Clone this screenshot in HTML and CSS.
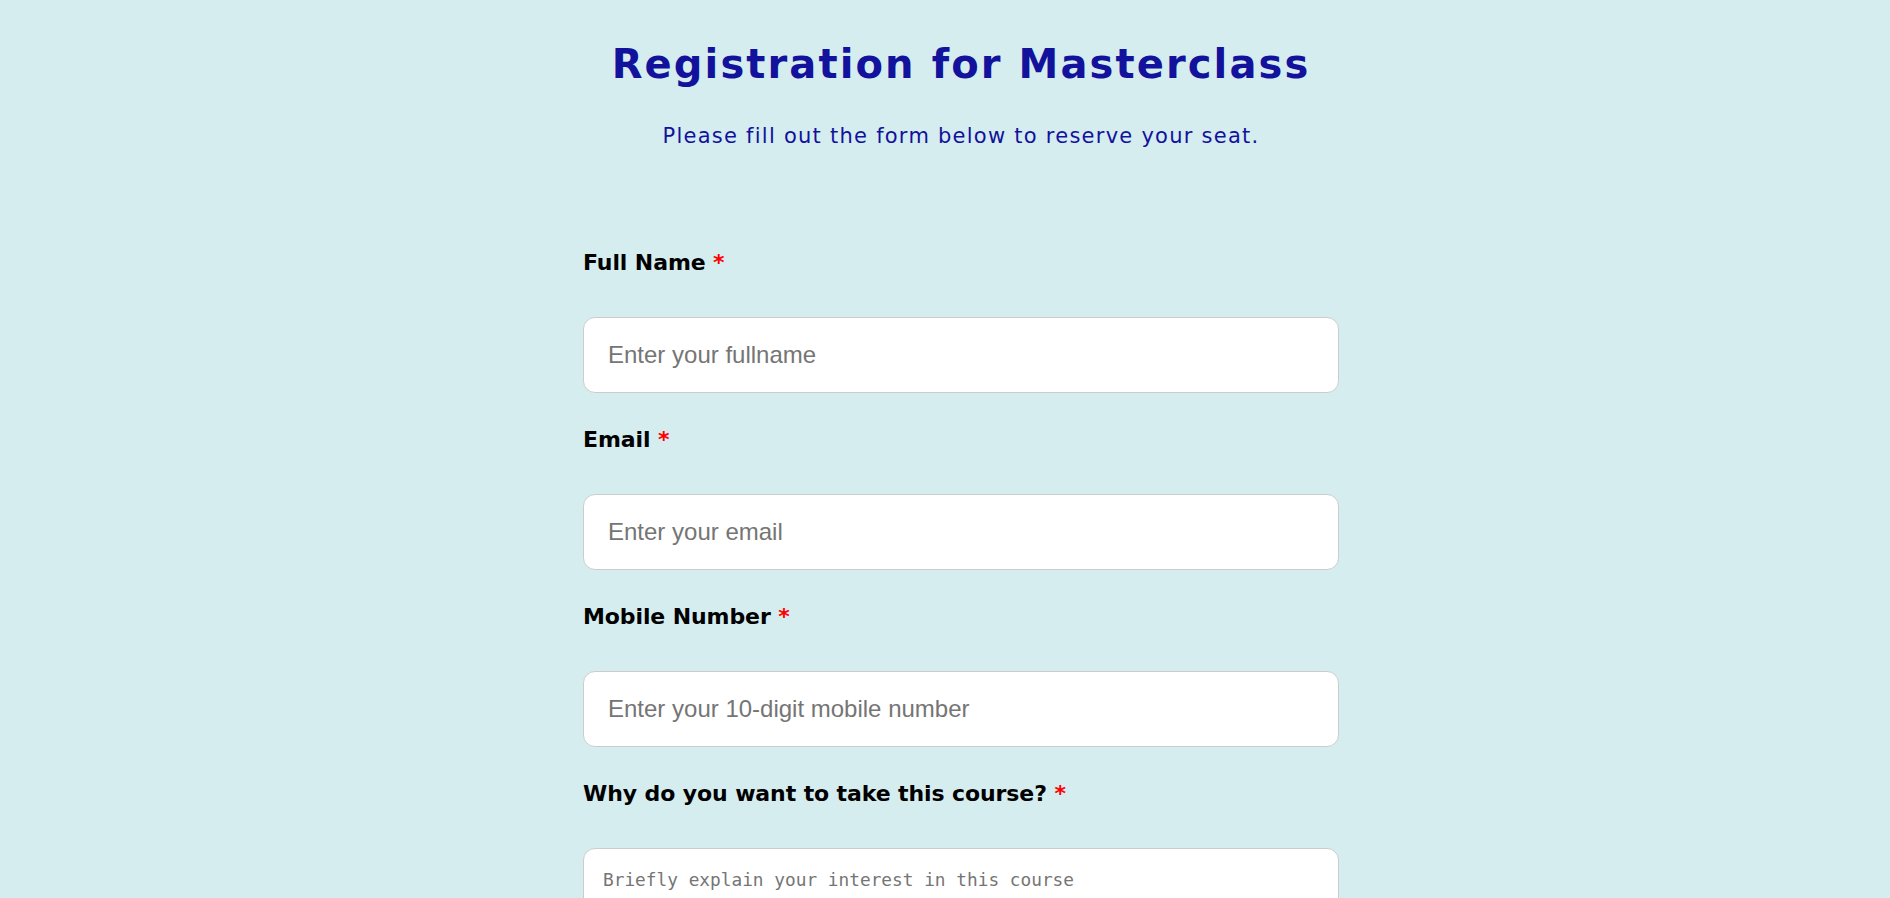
FILE: index.html
```html
<!DOCTYPE html>
<html lang="en">
<head>
<meta charset="utf-8">
<title>Registration for Masterclass</title>
<link rel="stylesheet" href="styles.css">
</head>
<body>
<main class="page">
  <header class="intro">
    <h1 class="title">Registration for Masterclass</h1>
    <p class="subtitle">Please fill out the form below to reserve your seat.</p>
  </header>
  <form class="form">
    <div class="field">
      <label class="label" for="name">Full Name <span class="req">*</span></label>
      <input class="input" id="name" type="text" placeholder="Enter your fullname">
    </div>
    <div class="field">
      <label class="label" for="email">Email <span class="req">*</span></label>
      <input class="input" id="email" type="email" placeholder="Enter your email">
    </div>
    <div class="field">
      <label class="label" for="mobile">Mobile Number <span class="req">*</span></label>
      <input class="input" id="mobile" type="tel" placeholder="Enter your 10-digit mobile number">
    </div>
    <div class="field">
      <label class="label" for="why">Why do you want to take this course? <span class="req">*</span></label>
      <textarea class="textarea" id="why" rows="5" placeholder="Briefly explain your interest in this course"></textarea>
    </div>
  </form>
</main>
</body>
</html>
```

FILE: styles.css
```css
html, body {
  margin: 0;
  padding: 0;
}

body {
  background: #d5edef;
  font-family: "DejaVu Sans", "Liberation Sans", sans-serif;
  padding-left: 32px;
}

.page {
  width: 756px;
  margin: 0 auto;
}

.intro {
  display: flex;
  flex-direction: column;
  align-items: center;
  padding-top: 40px;
}

.title {
  margin: 0;
  font-size: 40px;
  line-height: 48px;
  font-weight: 700;
  letter-spacing: 2.1px;
  color: #12129c;
  white-space: nowrap;
}

.subtitle {
  margin: 36px 0 0;
  font-size: 21px;
  line-height: 25px;
  font-weight: 400;
  letter-spacing: 1.25px;
  color: #12129c;
  white-space: nowrap;
}

.form {
  display: flex;
  flex-direction: column;
  padding-top: 101px;
}

.field {
  display: flex;
  flex-direction: column;
  height: 177px;
}

.label {
  font-size: 22px;
  line-height: 26px;
  font-weight: 700;
  letter-spacing: -0.1px;
  color: #000;
  margin-bottom: 41px;
}

.req {
  color: #ff0000;
}

.input {
  box-sizing: border-box;
  width: 100%;
  height: 76px;
  padding: 0 24px;
  border: 1px solid #cccccc;
  border-radius: 12px;
  background: #fff;
  font-family: "Liberation Sans", Arial, sans-serif;
  font-size: 24px;
  color: #333;
  outline: none;
}

.input::placeholder {
  color: #757575;
}

.textarea {
  box-sizing: border-box;
  width: 100%;
  height: 160px;
  padding: 20px 19px;
  border: 1px solid #cccccc;
  border-radius: 12px;
  background: #fff;
  font-family: "DejaVu Sans Mono", monospace;
  font-size: 17.8px;
  resize: vertical;
  outline: none;
}

.textarea::placeholder {
  color: #757575;
}
```
